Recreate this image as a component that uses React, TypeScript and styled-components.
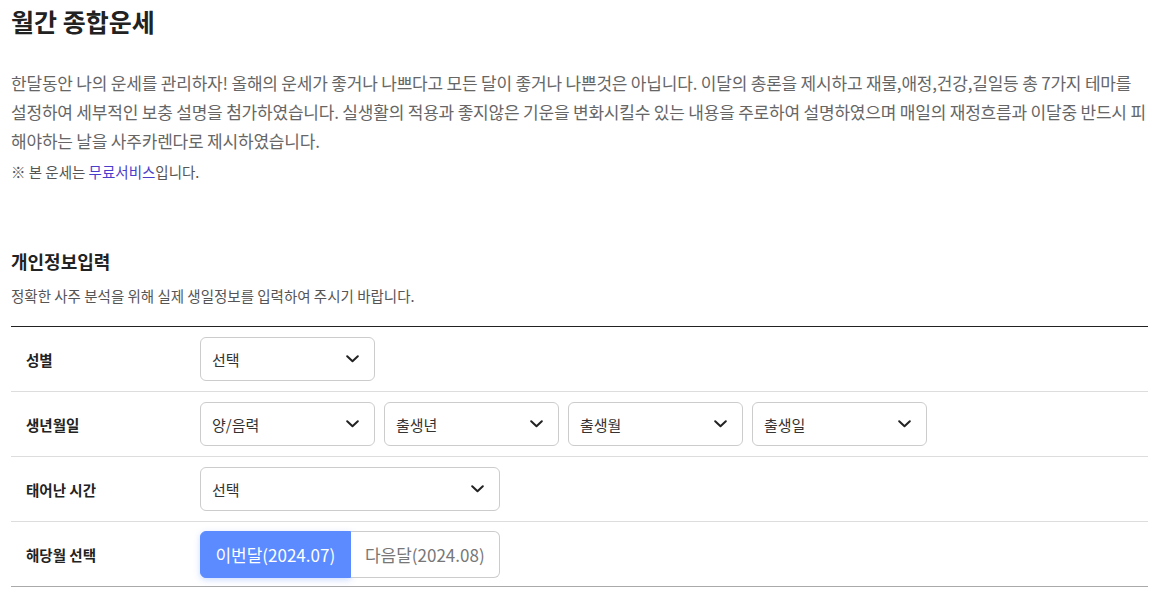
import React from "react";
import styled, { createGlobalStyle } from "styled-components";

const Global = createGlobalStyle`
  html, body { margin: 0; padding: 0; background: #fff; }
  body { font-family: "Noto Sans CJK KR", "Noto Sans", sans-serif; color: #222; }
  * { box-sizing: border-box; }
`;

const Page = styled.div`
  padding: 4px 9px 0 11px;
`;

const Title = styled.h1`
  margin: 0;
  font-size: 25px;
  line-height: 34px;
  font-weight: 700;
  color: #222;
`;

const Desc = styled.p`
  margin: 30px 0 0;
  font-size: 17px;
  line-height: 29px;
  letter-spacing: -0.2px;
  color: #666;
`;

const Note = styled.p`
  margin: 7px 0 0;
  font-size: 14.5px;
  line-height: 20px;
  color: #555;
`;

const Link = styled.a`
  color: #4b3dcc;
  text-decoration: none;
`;

const SectionTitle = styled.h2`
  margin: 66px 0 0;
  font-size: 18px;
  line-height: 26px;
  font-weight: 700;
  color: #222;
`;

const SectionDesc = styled.p`
  margin: 12px 0 0;
  font-size: 14.5px;
  line-height: 20px;
  color: #555;
`;

const Table = styled.div`
  margin-top: 20px;
  border-top: 1px solid #222;
  border-bottom: 1px solid #aaa;
`;

const Row = styled.div<{ $last?: boolean }>`
  display: grid;
  grid-template-columns: 189px 1fr;
  align-items: center;
  height: ${(p) => (p.$last ? 64 : 65)}px;
  border-bottom: ${(p) => (p.$last ? "none" : "1px solid #ddd")};
`;

const Label = styled.div`
  padding-left: 15px;
  font-size: 14.5px;
  font-weight: 700;
  color: #222;
`;

const Fields = styled.div`
  display: flex;
  gap: 9px;
  align-items: center;
`;

const SelectBox = styled.div<{ $w: number }>`
  width: ${(p) => p.$w}px;
  height: 44px;
  border: 1px solid #ccc;
  border-radius: 6px;
  display: flex;
  align-items: center;
  justify-content: space-between;
  padding: 0 15px 0 11px;
  font-size: 15px;
  color: #333;
  background: #fff;
`;

const Toggle = styled.div`
  display: flex;
  width: 300px;
  height: 47px;
`;

const ToggleBtn = styled.div<{ $active?: boolean }>`
  flex: 1;
  display: flex;
  align-items: center;
  justify-content: center;
  font-size: 17px;
  color: ${(p) => (p.$active ? "#fff" : "#777")};
  background: ${(p) => (p.$active ? "#5b8bff" : "#fff")};
  border: 1px solid ${(p) => (p.$active ? "#5b8bff" : "#ccc")};
  border-radius: ${(p) => (p.$active ? "6px 0 0 6px" : "0 6px 6px 0")};
  border-left: ${(p) => (p.$active ? "1px solid #5b8bff" : "none")};
  box-shadow: ${(p) => (p.$active ? "0 2px 6px rgba(91,139,255,0.3)" : "none")};
`;

const Chevron = () => (
  <svg width="13" height="8" viewBox="0 0 13 8" fill="none">
    <path d="M1.2 1.2 L6.5 6.3 L11.8 1.2" stroke="#222" strokeWidth="2" strokeLinecap="round" strokeLinejoin="round" />
  </svg>
);

const Select = ({ text, w }: { text: string; w: number }) => (
  <SelectBox $w={w}>
    <span>{text}</span>
    <Chevron />
  </SelectBox>
);

export default function App() {
  return (
    <>
      <Global />
      <Page>
        <Title>월간 종합운세</Title>
        <Desc>
          한달동안 나의 운세를 관리하자! 올해의 운세가 좋거나 나쁘다고 모든 달이 좋거나 나쁜것은 아닙니다. 이달의 총론을 제시하고 재물,애정,건강,길일등 총 7가지 테마를 설정하여 세부적인 보충 설명을 첨가하였습니다. 실생활의 적용과 좋지않은 기운을 변화시킬수 있는 내용을 주로하여 설명하였으며 매일의 재정흐름과 이달중 반드시 피해야하는 날을 사주카렌다로 제시하였습니다.
        </Desc>
        <Note>
          ※ 본 운세는 <Link>무료서비스</Link>입니다.
        </Note>
        <SectionTitle>개인정보입력</SectionTitle>
        <SectionDesc>정확한 사주 분석을 위해 실제 생일정보를 입력하여 주시기 바랍니다.</SectionDesc>
        <Table>
          <Row>
            <Label>성별</Label>
            <Fields>
              <Select text="선택" w={175} />
            </Fields>
          </Row>
          <Row>
            <Label>생년월일</Label>
            <Fields>
              <Select text="양/음력" w={175} />
              <Select text="출생년" w={175} />
              <Select text="출생월" w={175} />
              <Select text="출생일" w={175} />
            </Fields>
          </Row>
          <Row>
            <Label>태어난 시간</Label>
            <Fields>
              <Select text="선택" w={300} />
            </Fields>
          </Row>
          <Row $last>
            <Label>해당월 선택</Label>
            <Fields>
              <Toggle>
                <ToggleBtn $active>이번달(2024.07)</ToggleBtn>
                <ToggleBtn>다음달(2024.08)</ToggleBtn>
              </Toggle>
            </Fields>
          </Row>
        </Table>
      </Page>
    </>
  );
}
